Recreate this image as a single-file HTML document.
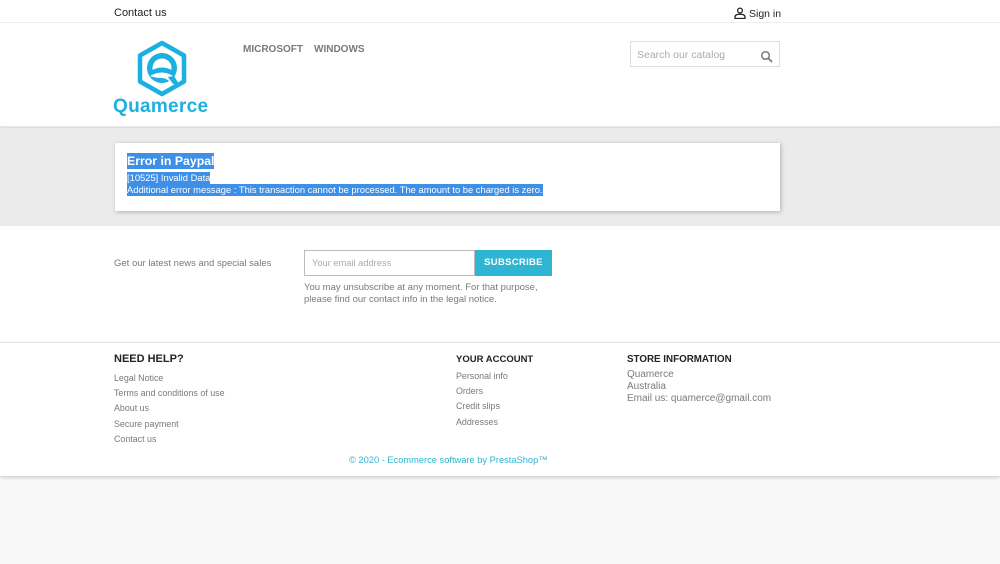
<!DOCTYPE html>
<html><head><meta charset="utf-8"><style>
*{margin:0;padding:0;box-sizing:border-box}
body{width:1000px;height:564px;background:#f8f8f8;font-family:"Liberation Sans",sans-serif;color:#7a7a7a;position:relative;overflow:hidden}
.abs{position:absolute}
</style></head><body>
<div class="abs" style="left:0;top:0;width:1000px;height:127px;background:#fff;border-bottom:1px solid #e6e6e6;box-shadow:0 2px 3px rgba(0,0,0,.12)"></div>
<div class="abs" style="left:0;top:22px;width:1000px;height:1px;background:#eee"></div>
<div class="abs" style="left:114px;top:7px;font-size:11px;color:#232323">Contact us</div>
<div class="abs" style="left:734px;top:7px;font-size:10.5px;color:#232323">
<svg width="12" height="12" viewBox="0 0 12 12" style="vertical-align:-2px;margin-right:3px"><circle cx="6" cy="3.5" r="2.4" fill="none" stroke="#232323" stroke-width="1.3"/><path d="M1 11.5V10c0-1.8 2-2.8 5-2.8s5 1 5 2.8v1.5z" fill="none" stroke="#232323" stroke-width="1.3"/></svg>Sign in</div>
<svg class="abs" style="left:135px;top:40px" width="54" height="58" viewBox="0 0 54 58">
<path d="M27 3 L49 15.5 L49 41.5 L27 54 L5 41.5 L5 15.5 Z" fill="#fff" stroke="#1ab0e0" stroke-width="4.5" stroke-linejoin="round"/>
<circle cx="27" cy="28" r="15" fill="#1ab0e0"/>
<circle cx="27" cy="28" r="9.5" fill="#fff"/>
<path d="M17.5 30 Q27 25 36.5 30 A9.5 9.5 0 0 1 17.5 30Z" fill="#1ab0e0"/>
<path d="M15 36 Q27 29 38 36 L44 44 L37 44 Q32 38 27 38 Q20 38 15 36Z" fill="#fff"/>
<path d="M33 37 L38 44 L44 44 L39 36Z" fill="#1ab0e0"/>
</svg>
<div class="abs" style="left:113px;top:96px;font-size:19px;font-weight:bold;color:#1ab0e0;letter-spacing:.3px">Quamerce</div>
<div class="abs" style="left:243px;top:44px;font-size:10px;font-weight:bold;color:#7a7a7a">MICROSOFT</div>
<div class="abs" style="left:314px;top:44px;font-size:10px;font-weight:bold;color:#7a7a7a">WINDOWS</div>
<div class="abs" style="left:630px;top:41px;width:150px;height:26px;border:1px solid #ddd;background:#fff"></div>
<div class="abs" style="left:637px;top:49px;font-size:10.5px;color:#aaa">Search our catalog</div>
<svg class="abs" style="left:760px;top:50px" width="13" height="13" viewBox="0 0 13 13"><circle cx="5.5" cy="5.5" r="3.8" fill="none" stroke="#7a7a7a" stroke-width="1.5"/><path d="M8.3 8.3L12 12" stroke="#7a7a7a" stroke-width="1.8"/></svg>
<div class="abs" style="left:0;top:128px;width:1000px;height:98px;background:#ebebeb"></div>
<div class="abs" style="left:115px;top:143px;width:665px;height:68px;background:#fff;box-shadow:1px 1px 4px rgba(0,0,0,.25)"></div>
<div class="abs" style="left:127px;top:153px;font-size:12.3px;font-weight:bold;color:#fff;background:#3d8fe8;line-height:16px">Error in Paypal</div>
<div class="abs" style="left:127px;top:172px;font-size:9.4px;color:#fff;background:#3d8fe8;line-height:12px">[10525] Invalid Data</div>
<div class="abs" style="left:127px;top:184px;font-size:9.4px;color:#fff;background:#3d8fe8;line-height:12px">Additional error message : This transaction cannot be processed. The amount to be charged is zero.</div>
<div class="abs" style="left:0;top:226px;width:1000px;height:115px;background:#fff"></div>
<div class="abs" style="left:114px;top:258px;font-size:9.5px;color:#7a7a7a">Get our latest news and special sales</div>
<div class="abs" style="left:304px;top:250px;width:171px;height:26px;border:1px solid #bbb;background:#fff"></div>
<div class="abs" style="left:312px;top:258px;font-size:9.3px;color:#aaa">Your email address</div>
<div class="abs" style="left:475px;top:250px;width:77px;height:26px;background:#2fb5d2;color:#fff;font-size:9.5px;font-weight:bold;text-align:center;line-height:26px;letter-spacing:.3px">SUBSCRIBE</div>
<div class="abs" style="left:304px;top:282px;font-size:9.5px;line-height:12px;color:#7a7a7a">You may unsubscribe at any moment. For that purpose,<br>please find our contact info in the legal notice.</div>
<div class="abs" style="left:0;top:342px;width:1000px;height:134px;background:#fff;border-top:1px solid #e6e6e6;box-shadow:0 2px 3px rgba(0,0,0,.15)"></div>
<div class="abs" style="left:114px;top:353px;font-size:11px;font-weight:bold;color:#232323">NEED HELP?</div>
<div class="abs" style="left:114px;top:371px;font-size:8.9px;line-height:15.2px;color:#7a7a7a">Legal Notice<br>Terms and conditions of use<br>About us<br>Secure payment<br>Contact us</div>
<div class="abs" style="left:456px;top:354px;font-size:9.5px;font-weight:bold;color:#232323">YOUR ACCOUNT</div>
<div class="abs" style="left:456px;top:369px;font-size:8.9px;line-height:15.2px;color:#7a7a7a">Personal info<br>Orders<br>Credit slips<br>Addresses</div>
<div class="abs" style="left:627px;top:354px;font-size:9.8px;font-weight:bold;color:#232323">STORE INFORMATION</div>
<div class="abs" style="left:627px;top:369px;font-size:10px;line-height:12px;color:#7a7a7a">Quamerce<br>Australia<br>Email us: quamerce@gmail.com</div>
<div class="abs" style="left:349px;top:455px;font-size:9.3px;color:#2fb5d2">© 2020 - Ecommerce software by PrestaShop™</div>
</body></html>
